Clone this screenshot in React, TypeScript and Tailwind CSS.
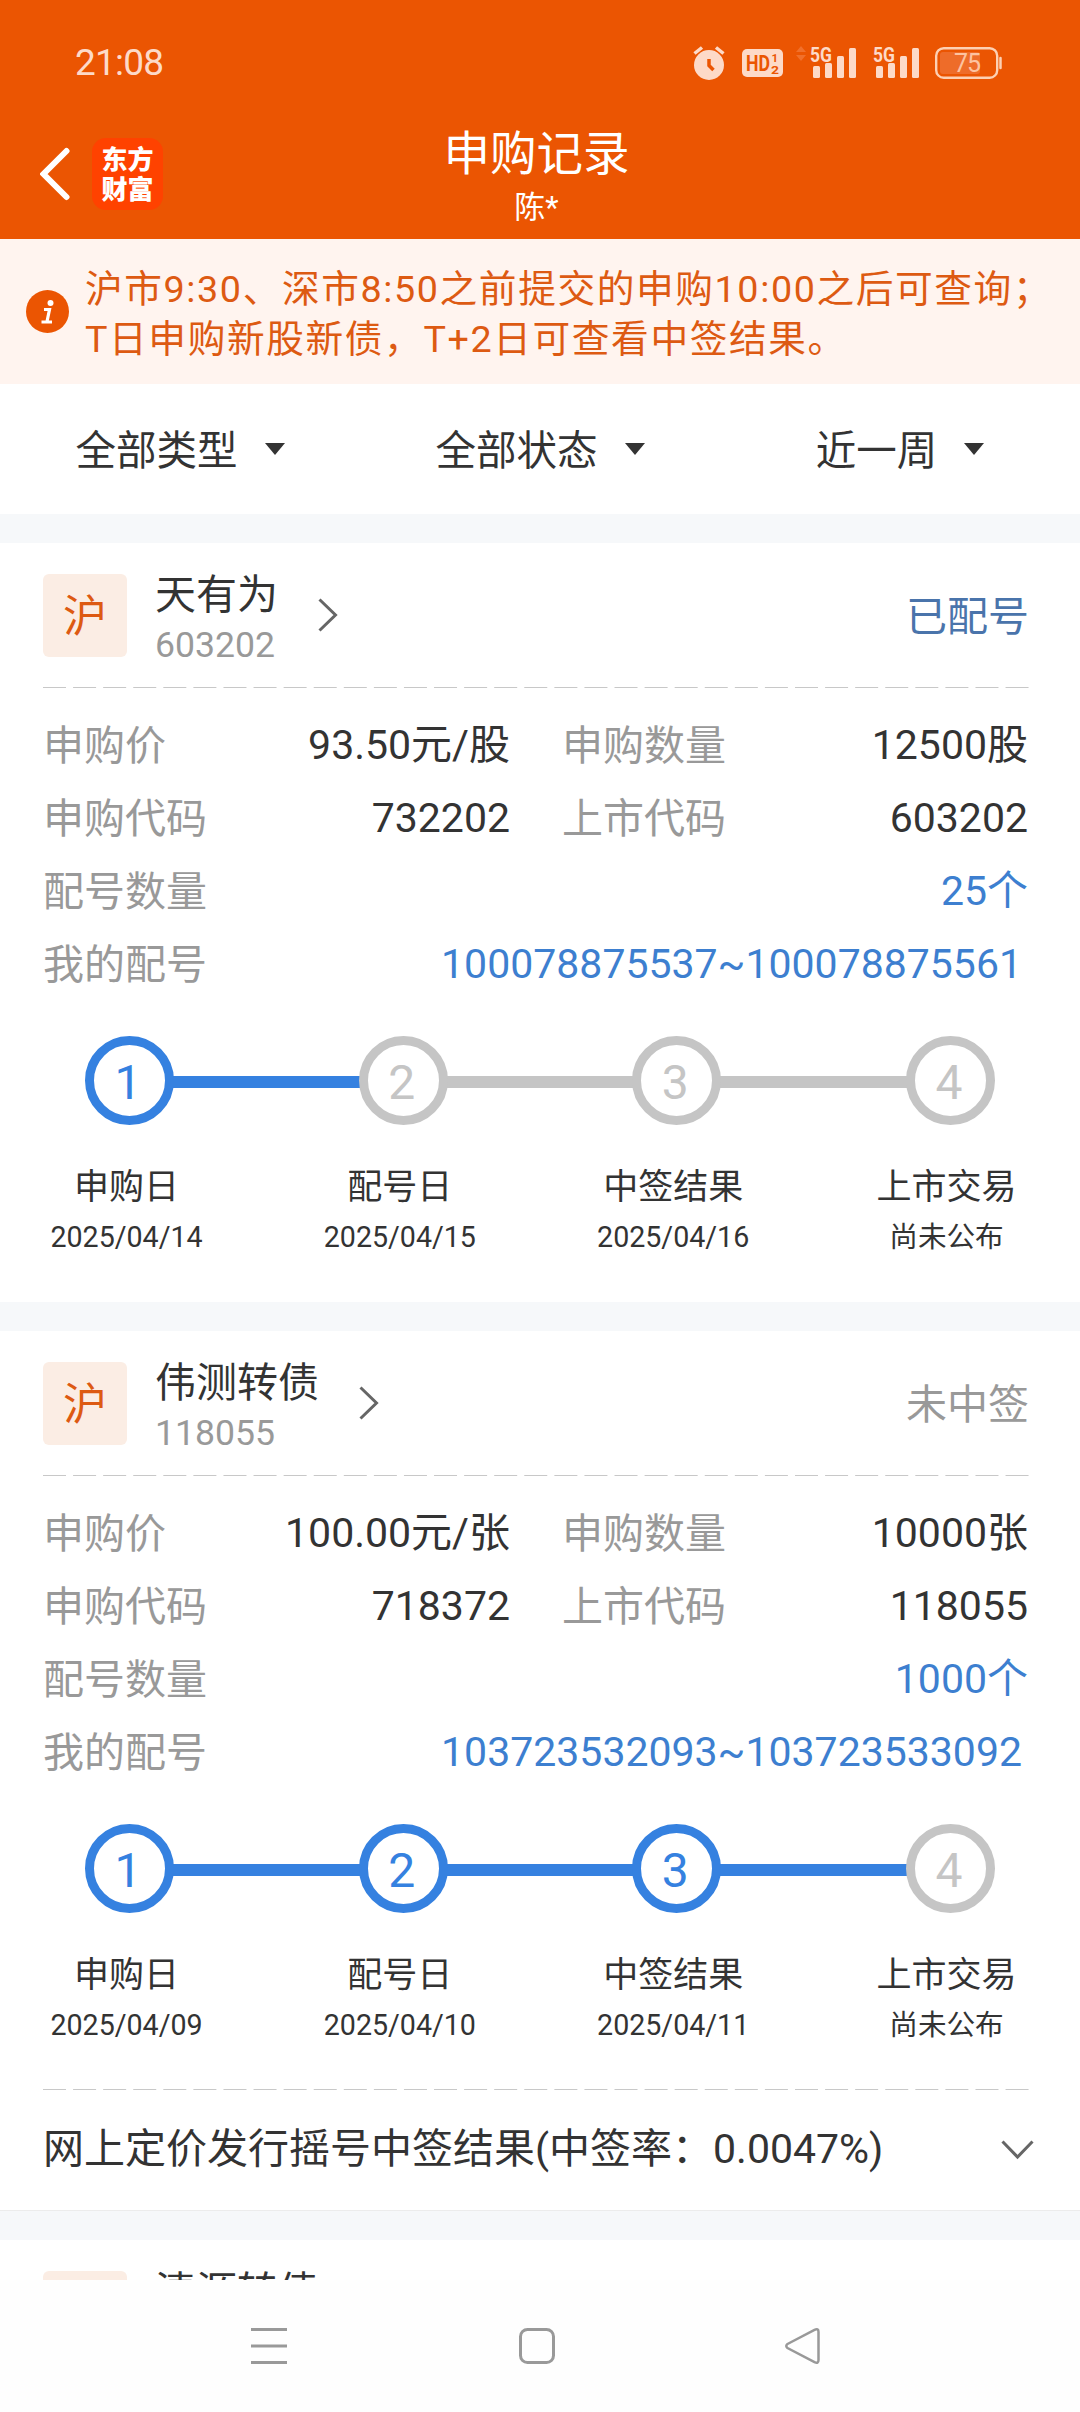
import React from 'react';
import clsx from 'clsx';

interface Step {
  label: string;
  date: string;
}

interface RecordItem {
  name: string;
  code: string;
  status: string;
  statusClass: string;
  price: string;
  amount: string;
  applyCode: string;
  count: string;
  numbers: string;
  done: number; // highlighted circles
  lines: number; // highlighted connectors
  steps: Step[];
  result?: string;
}

const records: RecordItem[] = [
  {
    name: '天有为',
    code: '603202',
    status: '已配号',
    statusClass: 'text-[#4a74ab]',
    price: '93.50元/股',
    amount: '12500股',
    applyCode: '732202',
    count: '25个',
    numbers: '100078875537~100078875561',
    done: 1,
    lines: 1,
    steps: [
      { label: '申购日', date: '2025/04/14' },
      { label: '配号日', date: '2025/04/15' },
      { label: '中签结果', date: '2025/04/16' },
      { label: '上市交易', date: '尚未公布' },
    ],
  },
  {
    name: '伟测转债',
    code: '118055',
    status: '未中签',
    statusClass: 'text-[#999999]',
    price: '100.00元/张',
    amount: '10000张',
    applyCode: '718372',
    count: '1000个',
    numbers: '103723532093~103723533092',
    done: 3,
    lines: 3,
    steps: [
      { label: '申购日', date: '2025/04/09' },
      { label: '配号日', date: '2025/04/10' },
      { label: '中签结果', date: '2025/04/11' },
      { label: '上市交易', date: '尚未公布' },
    ],
    result: '网上定价发行摇号中签结果(中签率：0.0047%)',
  },
];

const Signal = () => (
  <svg className="overflow-visible" width="47" height="34" viewBox="0 0 47 34" fill="#fddac8">
    <text x="0" y="16" fontSize="21" fontWeight="700" textLength="22" lengthAdjust="spacingAndGlyphs">5G</text>
    <rect x="3" y="20" width="7" height="12" rx="1.5" />
    <rect x="15" y="17" width="7" height="15" rx="1.5" />
    <rect x="27" y="10" width="7" height="22" rx="1.5" />
    <rect x="39" y="2" width="7" height="30" rx="1.5" />
  </svg>
);

const StatusBar = () => (
  <div className="flex h-[125px] items-center pr-[77px] pl-[75px]">
    <span className="text-[37px] leading-none tracking-[-0.8px] text-[#fddac8]">21:08</span>
    <div className="ml-auto flex items-center">
      <svg width="32" height="36" viewBox="0 0 32 36" fill="none">
        <circle cx="16" cy="20" r="15" fill="#fddac8" />
        <path d="M1.500 8.500 9 2.500M30.500 8.500 23 2.500" stroke="#fddac8" strokeWidth="3.500" />
        <path d="M16 14v6.500l4.500 4.500" stroke="#eb5502" strokeWidth="3.500" />
      </svg>
      <svg className="ml-[17px]" width="41" height="28" viewBox="0 0 41 28">
        <rect width="41" height="28" rx="5" fill="#fddac8" />
        <g fill="#eb5502" fontWeight="700">
          <text x="4" y="22" fontSize="22" textLength="24" lengthAdjust="spacingAndGlyphs">HD</text>
          <text x="29.500" y="13" fontSize="11.500">1</text>
          <text x="29" y="25" fontSize="11.500" textLength="8" lengthAdjust="spacingAndGlyphs">2</text>
        </g>
      </svg>
      <svg className="ml-[13px]" width="10" height="34" viewBox="0 0 10 34" fill="#f1702b">
        <path d="M5 0 10 6H0zM5 15 10 9H0z" />
      </svg>
      <div className="ml-1 flex gap-4">
        <Signal />
        <Signal />
      </div>
      <svg className="ml-[15px]" width="68" height="32" viewBox="0 0 68 32" fill="none">
        <rect x="1.200" y="1.200" width="61" height="29.500" rx="7.500" stroke="#fdd0b3" strokeWidth="2.400" />
        <rect x="5" y="5" width="40" height="22" rx="3" fill="#ee6c29" />
        <path d="M65.500 11v10" stroke="#fdd0b3" strokeWidth="2.500" strokeLinecap="round" />
        <text x="19" y="25" fontSize="25" fill="#fdc3a0" textLength="27">75</text>
      </svg>
    </div>
  </div>
);

const TitleBar = () => (
  <div className="flex h-[114px] items-start px-10">
    <div className="flex w-[200px] items-center pt-[13px]">
      <svg width="30" height="54" viewBox="0 0 30 54" fill="none">
        <path d="M26.500 4 3.500 27l23 23" stroke="#fff" strokeWidth="6" strokeLinecap="round" />
      </svg>
      <div className="ml-[22px] flex h-[72px] w-[71px] flex-col items-center justify-center rounded-[14px] bg-[#ff4200] pb-[3px] font-['Noto_Sans_CJK_SC'] text-[26px] leading-[30px] font-black text-white">
        <span>东方</span>
        <span>财富</span>
      </div>
    </div>
    <div className="flex flex-1 flex-col items-center pr-[7px] text-white">
      <h1 className="pt-px text-[46.500px] leading-[56px]">申购记录</h1>
      <p className="mt-[6px] text-[31px] leading-[40px]">陈*</p>
    </div>
    <div className="w-[200px]" />
  </div>
);

const Notice = () => (
  <div className="flex h-[145px] items-center bg-[#fff4ef] pl-[26px]">
    <svg width="43" height="43" viewBox="0 0 43 43">
      <circle cx="21.500" cy="21.500" r="21.500" fill="#eb5502" />
      <circle cx="24.500" cy="13" r="3" fill="#fff" />
      <path d="M18 19.500h5.500l-2.500 12M15.500 32h10.500" stroke="#fff" strokeWidth="3.200" fill="none" />
    </svg>
    <p className="ml-[16px] pt-[5px] text-[37.700px] leading-[50px] tracking-[1.600px] whitespace-nowrap text-[#dd5a12]">
      沪市9:30、深市8:50之前提交的申购10:00之后可查询；
      <br />
      T日申购新股新债，T+2日可查看中签结果。
    </p>
  </div>
);

const Filters = () => (
  <div className="grid h-[130px] grid-cols-3 bg-white">
    {['全部类型', '全部状态', '近一周'].map((label) => (
      <div key={label} className="flex items-center justify-center text-[40.500px] text-[#333333]">
        <span className="pt-[5px]">{label}</span>
        <svg className="ml-[27px]" width="20" height="12" viewBox="0 0 20 12">
          <path d="M0 0h20L10 12z" fill="#333333" />
        </svg>
      </div>
    ))}
  </div>
);

const DashedLine = () => (
  <svg className="ml-[43px] block" width="986" height="1" viewBox="0 0 986 1">
    <path d="M0 .5h986" stroke="#c8c8c8" strokeDasharray="23 7.080" />
  </svg>
);

const CardHead: React.FC<{ name: string; code?: string; status?: string; statusClass?: string }> = ({
  name,
  code,
  status,
  statusClass,
}) => (
  <div className="flex h-[144px] shrink-0 items-center pr-[51px] pl-[43px]">
    <div className="flex h-[83px] w-[84px] items-center justify-center rounded-md bg-[#fbede4] pt-[3px] text-[44px] leading-none text-[#dd5a12]">
      沪
    </div>
    <div className="ml-[28px] flex h-[92px] flex-col">
      <span className="text-[41px] leading-[52px] text-[#333333]">{name}</span>
      <span className="mt-[3px] text-[35.600px] leading-[42px] text-[#999999]">{code}</span>
    </div>
    <svg className="ml-[40px]" width="20" height="34" viewBox="0 0 20 34" fill="none">
      <path d="M1.500 1.500 17.500 17l-16 15.500" stroke="#666666" strokeWidth="3" />
    </svg>
    <span className={clsx('ml-auto pt-[6px] text-[41px]', statusClass)}>{status}</span>
  </div>
);

const Field: React.FC<{ label: string; value: string; className?: string; valueClass?: string }> = ({
  label,
  value,
  className,
  valueClass = 'text-[#333333]',
}) => (
  <div className={clsx('flex h-[73px] items-center justify-between text-[41px] leading-[73px]', className)}>
    <span className="pt-[2px] text-[#999999]">{label}</span>
    <span className={valueClass}>{value}</span>
  </div>
);

const Stepper: React.FC<{ steps: Step[]; done: number; lines: number }> = ({ steps, done, lines }) => (
  <>
    <div className="flex items-center px-[85px] pt-[35px]">
      {steps.map((step, i) => (
        <React.Fragment key={step.label}>
          {i > 0 && (
            <div className={clsx('-mx-px mt-[2px] h-3 flex-1', i <= lines ? 'bg-[#3581e0]' : 'bg-[#c5c5c5]')} />
          )}
          <div
            className={clsx(
              'z-10 flex size-[89px] shrink-0 items-center justify-center rounded-full border-[9px] bg-white pt-[4px] pr-[3px] text-[48px] leading-none',
              i < done ? 'border-[#3581e0] text-[#3581e0]' : 'border-[#c5c5c5] text-[#c5c5c5]',
            )}
          >
            {i + 1}
          </div>
        </React.Fragment>
      ))}
    </div>
    <div className="flex justify-between pt-[38px] pr-[58px] pl-[51px] text-[#333333]">
      {steps.map((step) => (
        <div key={step.label} className="flex w-[151px] flex-col items-center whitespace-nowrap">
          <span className="text-[35px] leading-[50px]">{step.label}</span>
          <span className="text-[28.600px] leading-[48px]">{step.date}</span>
        </div>
      ))}
    </div>
  </>
);

const RecordCard: React.FC<{ item: RecordItem }> = ({ item }) => (
  <section className="mb-[29px] shrink-0 bg-white">
    <CardHead name={item.name} code={item.code} status={item.status} statusClass={item.statusClass} />
    <DashedLine />
    <div className="grid grid-cols-[467px_466px] gap-x-[52px] pt-[21px] pl-[43px]">
      <Field label="申购价" value={item.price} />
      <Field label="申购数量" value={item.amount} />
      <Field label="申购代码" value={item.applyCode} />
      <Field label="上市代码" value={item.code} />
      <Field className="col-span-2" label="配号数量" value={item.count} valueClass="text-[#3d7fd0]" />
      <Field className="col-span-2" label="我的配号" value={item.numbers} valueClass="mr-[6px] text-[#3d7fd0]" />
    </div>
    <Stepper steps={item.steps} done={item.done} lines={item.lines} />
    {item.result ? (
      <div className="pt-[40px]">
        <DashedLine />
        <div className="flex h-[121px] items-center justify-between border-b border-[#ececec] pr-[46px] pl-[43px] text-[41px] text-[#333333]">
          <span>{item.result}</span>
          <svg width="33" height="20" viewBox="0 0 33 20" fill="none">
            <path d="M1.500 1.500 16.500 17l15-15.500" stroke="#666666" strokeWidth="3" />
          </svg>
        </div>
      </div>
    ) : (
      <div className="h-[41px]" />
    )}
  </section>
);

const NavBar = () => (
  <div className="flex h-[132px] shrink-0 items-center bg-[#fefefe] pl-[251px]">
    <svg width="36" height="38" viewBox="0 0 36 38" stroke="#999999" strokeWidth="3">
      <path d="M0 2.500h36M0 19h36M0 35.500h36" />
    </svg>
    <svg className="ml-[232px]" width="36" height="38" viewBox="0 0 36 38" fill="none">
      <rect x="1.500" y="2.500" width="33" height="33" rx="7" stroke="#999999" strokeWidth="3" />
    </svg>
    <svg className="ml-[230px]" width="36" height="38" viewBox="0 0 36 38" fill="none">
      <path
        d="M2.500 17 29.500 2.800Q33.500 1 33.500 5v28q0 4-4 2.200L2.500 21q-2.500-2 0-4z"
        stroke="#999999"
        strokeWidth="2.500"
      />
    </svg>
  </div>
);

export default function App() {
  return (
    <div className="flex h-[2412px] w-[1080px] flex-col overflow-hidden bg-[#f6f8fa] font-[Roboto,'Noto_Sans_CJK_SC',sans-serif]">
      <header className="bg-[#eb5502]">
        <StatusBar />
        <TitleBar />
      </header>
      <Notice />
      <Filters />
      <main className="mt-[29px] flex min-h-0 flex-1 flex-col overflow-hidden">
        {records.map((item) => (
          <RecordCard key={item.code} item={item} />
        ))}
        <section className="flex flex-col bg-white">
          <CardHead name="清源转债" />
        </section>
      </main>
      <NavBar />
    </div>
  );
}
